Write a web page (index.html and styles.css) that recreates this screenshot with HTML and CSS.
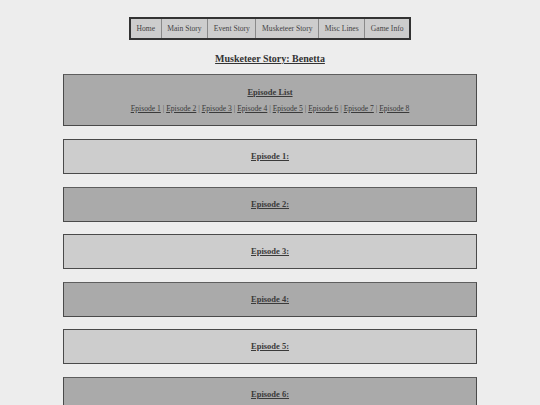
FILE: index.html
```html
<!DOCTYPE html>
<html lang="en">
<head>
<meta charset="utf-8">
<title>Musketeer Story: Benetta</title>
<link rel="stylesheet" href="styles.css">
</head>
<body>
<div class="page">
  <nav class="topnav">
    <a class="navitem" href="#">Home</a>
    <a class="navitem" href="#">Main Story</a>
    <a class="navitem" href="#">Event Story</a>
    <a class="navitem" href="#">Musketeer Story</a>
    <a class="navitem" href="#">Misc Lines</a>
    <a class="navitem" href="#">Game Info</a>
  </nav>

  <h1 class="pagetitle">Musketeer Story: Benetta</h1>

  <section class="box box-dark episode-list">
    <h2 class="boxtitle"><a href="#">Episode List</a></h2>
    <p class="eplinks">
      <a href="#ep1">Episode 1</a> | <a href="#ep2">Episode 2</a> | <a href="#ep3">Episode 3</a> | <a href="#ep4">Episode 4</a> | <a href="#ep5">Episode 5</a> | <a href="#ep6">Episode 6</a> | <a href="#ep7">Episode 7</a> | <a href="#ep8">Episode 8</a>
    </p>
  </section>

  <section class="box box-light episode" id="ep1"><h2 class="boxtitle"><a href="#">Episode 1:</a></h2></section>
  <section class="box box-dark episode" id="ep2"><h2 class="boxtitle"><a href="#">Episode 2:</a></h2></section>
  <section class="box box-light episode" id="ep3"><h2 class="boxtitle"><a href="#">Episode 3:</a></h2></section>
  <section class="box box-dark episode" id="ep4"><h2 class="boxtitle"><a href="#">Episode 4:</a></h2></section>
  <section class="box box-light episode" id="ep5"><h2 class="boxtitle"><a href="#">Episode 5:</a></h2></section>
  <section class="box box-dark episode" id="ep6"><h2 class="boxtitle"><a href="#">Episode 6:</a></h2></section>
  <section class="box box-light episode" id="ep7"><h2 class="boxtitle"><a href="#">Episode 7:</a></h2></section>
  <section class="box box-dark episode" id="ep8"><h2 class="boxtitle"><a href="#">Episode 8:</a></h2></section>
</div>
</body>
</html>
```

FILE: styles.css
```css
html, body {
  margin: 0;
  padding: 0;
  background: #ededed;
}

body {
  font-family: "Liberation Serif", "Times New Roman", serif;
  color: #3a3a3a;
}

.page {
  display: flex;
  flex-direction: column;
  align-items: center;
  padding-top: 17px;
}

/* top navigation bar */
.topnav {
  display: flex;
  border: 2px solid #333;
  background: #cdcdcd;
}

.navitem {
  display: block;
  font-size: 7.6px;
  line-height: 9px;
  padding: 5px 5.6px;
  color: #444;
  text-decoration: none;
  border-left: 1px solid #8a8a8a;
}

.navitem:first-child {
  border-left: none;
}

.pagetitle {
  margin: 13px 0 9px;
  font-size: 10px;
  line-height: 12px;
  font-weight: bold;
  color: #333;
  text-decoration: underline;
}

/* episode boxes */
.box {
  box-sizing: border-box;
  width: 414px;
  border: 1px solid #4a4a4a;
  text-align: center;
}

.box-dark {
  background: #aaaaaa;
  border-top-color: #5e5e5e;
}

.box-light {
  background: #cdcdcd;
}

.box a {
  color: #3a3a3a;
}

.boxtitle {
  margin: 0;
  font-size: 8.5px;
  line-height: 11px;
  font-weight: bold;
}

.episode-list {
  padding: 11.5px 10px 12px;
  margin-bottom: 13px;
}

.eplinks {
  margin: 6.5px 0 0;
  font-size: 7.6px;
  line-height: 9px;
  color: #555;
}

.episode {
  height: 35px;
  padding: 11px 10px;
  margin-bottom: 12.5px;
}
```
